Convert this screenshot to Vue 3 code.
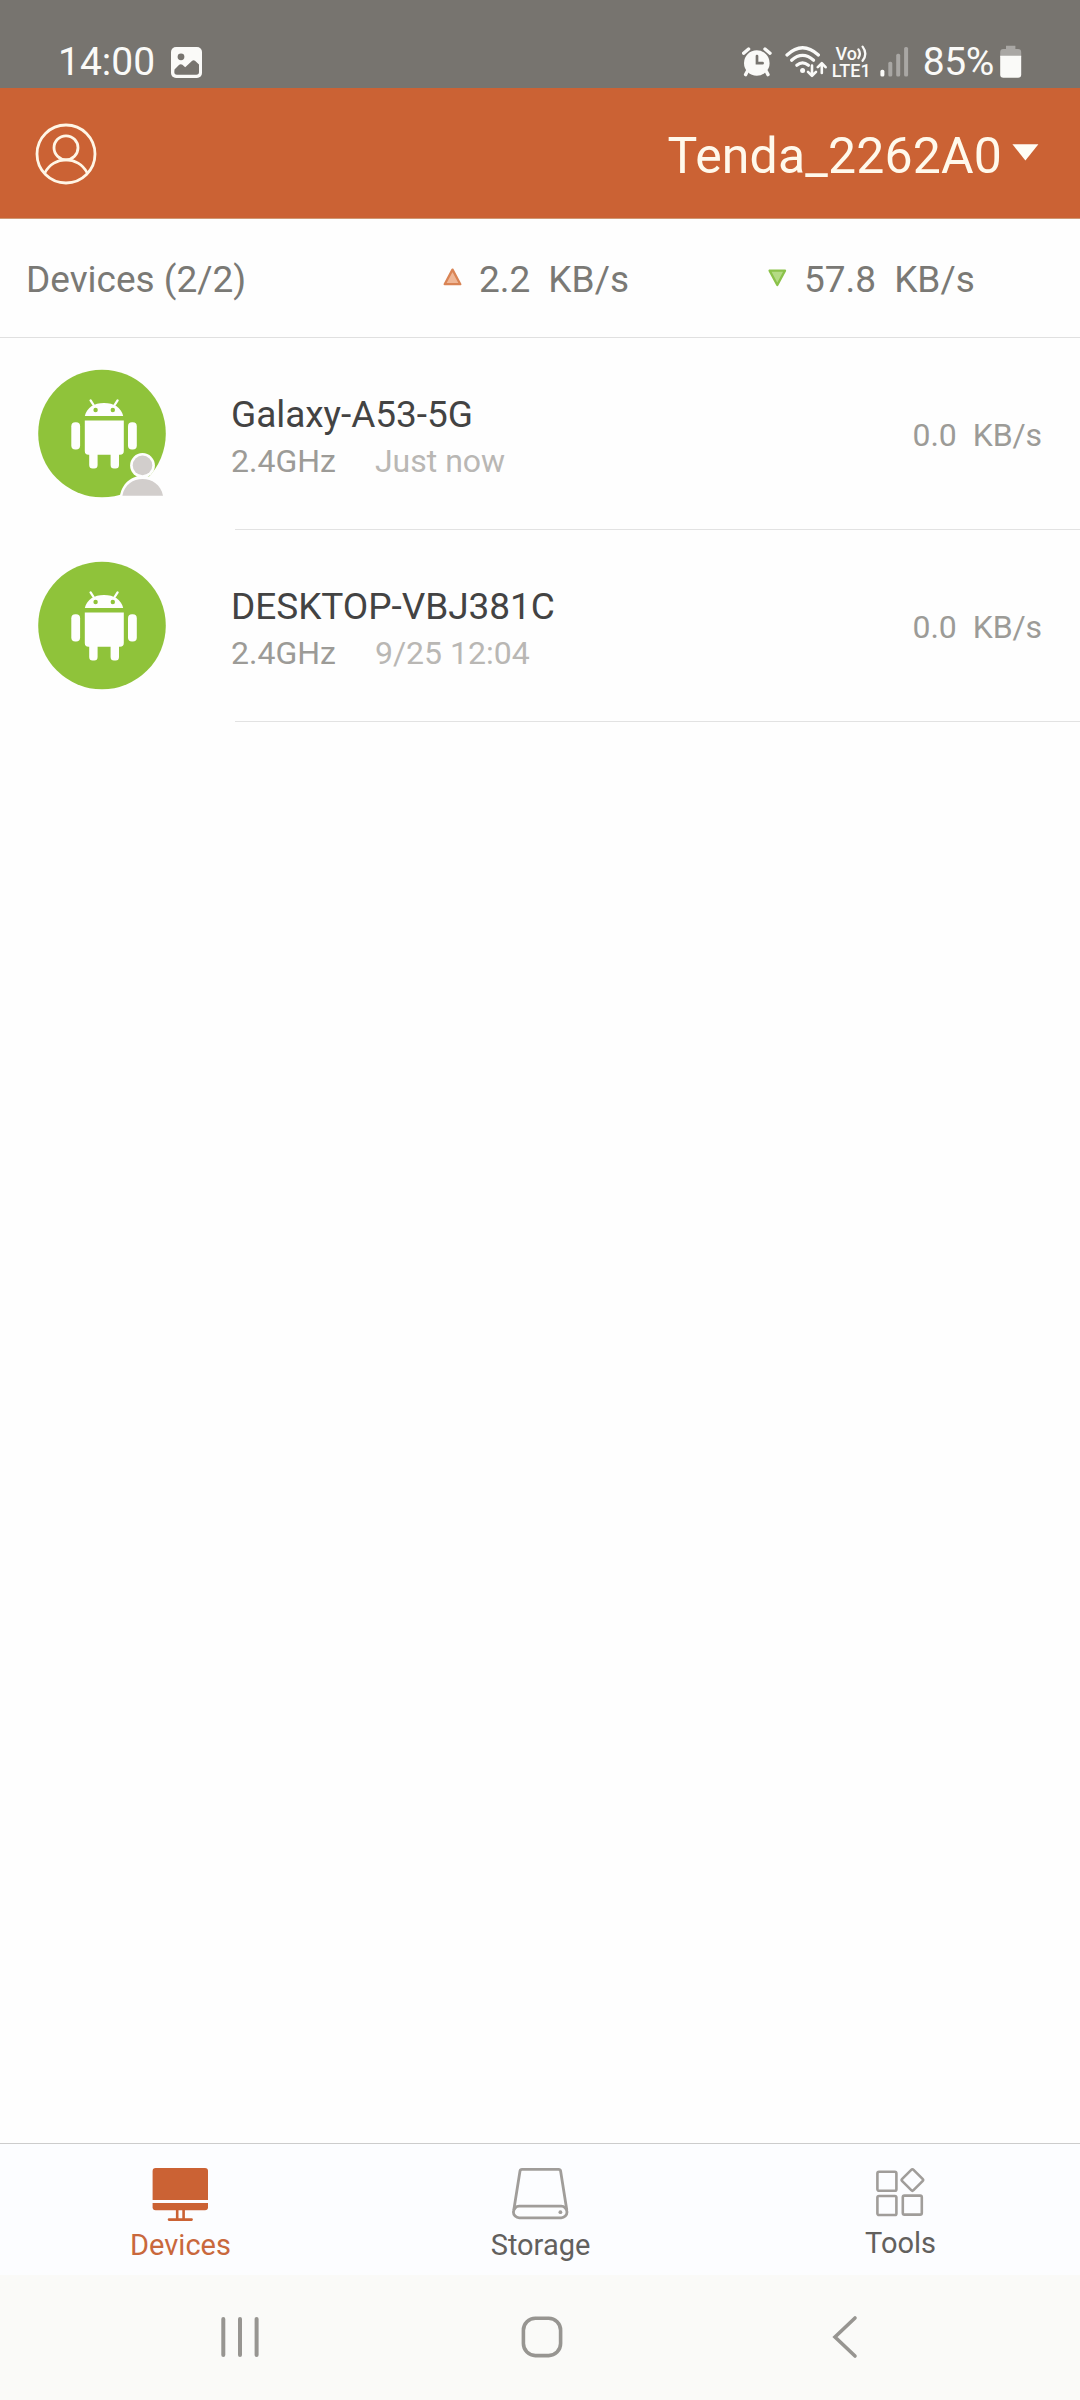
<template>
  <div class="screen">
    <header class="status-bar">
      <span class="clock">14:00</span>
      <svg class="icon-image" width="31" height="31" viewBox="0 0 31 31">
        <rect width="31" height="31" rx="5" fill="#fafaf8" />
        <circle cx="10" cy="9.8" r="3.4" fill="#77746f" />
        <path d="M3.5 22.5 L8.2 17.8 Q9.8 16.6 11.4 17.8 L14.2 20.3 L21.2 13.7 Q22.6 12.6 24 13.7 L28 17.6 V25 Q28 27.7 25.3 27.7 H6 Q3.3 27.7 3.3 25 Z" fill="#77746f" />
      </svg>
      <div class="status-right">
        <svg width="30" height="30" viewBox="0 0 30 30">
          <circle cx="14.8" cy="16" r="12.8" fill="#fafaf8" />
          <path d="M1.6 6.2 L6.6 2 M28 6.2 L23 2" stroke="#fafaf8" stroke-width="3.4" stroke-linecap="round" />
          <path d="M5.2 24.5 L3.6 27.6 M24.4 24.5 L26 27.6" stroke="#fafaf8" stroke-width="3.4" stroke-linecap="round" />
          <path d="M15 9 V16.2 H20.6" fill="none" stroke="#77746f" stroke-width="2.7" stroke-linecap="round" />
        </svg>
        <svg class="icon-wifi" width="42" height="34" viewBox="0 0 42 34">
          <g fill="none" stroke="#fafaf8" stroke-width="3.2" stroke-linecap="round">
            <path d="M2 10 Q17.5 -4.5 33.4 10" />
            <path d="M6.6 15.2 Q17.5 5.5 28.6 15.2" />
            <path d="M11.8 20.3 Q17.5 15.6 23.4 20.3" />
          </g>
          <circle cx="17.6" cy="25.4" r="2.5" fill="#fafaf8" />
          <g fill="none" stroke="#fafaf8" stroke-width="2.6" stroke-linecap="round" stroke-linejoin="round">
            <path d="M27 20.5 V30.5 M23 26.8 L27 30.8 L31 26.8" />
            <path d="M36.8 28 V18.6 M32.8 22.2 L36.8 18.2 L40.6 22.2" />
          </g>
        </svg>
        <div class="volte">
          <div class="volte-top">
            <span>Vo</span>
            <svg width="11" height="17" viewBox="0 0 11 17">
              <path d="M1.4 4.4 Q4.4 8.7 1.4 13 M5.6 1.6 Q11 8.7 5.6 15.8" fill="none" stroke="#fafaf8" stroke-width="2.3" stroke-linecap="round" />
            </svg>
          </div>
          <span class="volte-bottom">LTE1</span>
        </div>
        <svg class="icon-signal" width="29" height="30" viewBox="0 0 29 30">
          <rect x="0.4" y="22.8" width="4" height="6.8" rx="1.6" fill="#fafaf8" />
          <g fill="#a9a7a4">
            <rect x="8.3" y="14.8" width="4" height="14.8" rx="1.6" />
            <rect x="16.2" y="6.8" width="4" height="22.8" rx="1.6" />
            <rect x="24.1" y="0" width="4" height="29.6" rx="1.6" />
          </g>
        </svg>
        <span class="battery-text">85%</span>
        <svg class="icon-battery" width="22" height="33" viewBox="0 0 22 33">
          <path d="M6 0.8 H15.4 V4 H18 Q21.2 4 21.2 7.2 V12 H0.2 V7.2 Q0.2 4 3.4 4 H6 Z" fill="#a9a7a4" />
          <path d="M0.2 10.8 H21.2 V29.6 Q21.2 32.8 18 32.8 H3.4 Q0.2 32.8 0.2 29.6 Z" fill="#fafaf8" />
        </svg>
      </div>
    </header>

    <div class="app-bar">
      <svg class="account" width="62" height="62" viewBox="0 0 62 62">
        <g fill="none" stroke="#fff6e6" stroke-width="2.8">
          <circle cx="31" cy="31" r="29" />
          <circle cx="31" cy="24.8" r="12" />
          <path d="M9.8 50 C18.5 32.5 43.5 32.5 52.2 50" />
        </g>
      </svg>
      <div class="network">
        <span>{{ network }}</span>
        <svg width="27" height="17" viewBox="0 0 27 17">
          <path d="M0.4 0.3 H26.4 L13.4 16.6 Z" fill="#fffdf5" />
        </svg>
      </div>
    </div>

    <div class="summary">
      <span>Devices (2/2)</span>
      <div class="rate">
        <svg width="19" height="18" viewBox="0 0 19 18">
          <path d="M9.5 1.6 L17.3 16.2 H1.7 Z" fill="#efb797" stroke="#d98455" stroke-width="2.3" stroke-linejoin="round" />
        </svg>
        <span class="rate-value">2.2</span>
        <span>KB/s</span>
      </div>
      <div class="rate">
        <svg class="down" width="19" height="18" viewBox="0 0 19 18">
          <path d="M1.6 1.6 H17 L9.3 16 Z" fill="#b4db84" stroke="#8bc24a" stroke-width="2.3" stroke-linejoin="round" />
        </svg>
        <span class="rate-value">57.8</span>
        <span>KB/s</span>
      </div>
    </div>

    <main class="device-list">
      <div v-for="device in devices" :key="device.name" class="device">
        <div class="avatar">
          <svg width="130" height="130" viewBox="0 0 130 130">
            <circle cx="64" cy="64.5" r="63.8" fill="#8fc33a" />
            <g transform="translate(0 1)">
              <g fill="#fefefe">
                <path d="M46.8 46 C48.8 37.6 56 33 66 33 C76 33 83.2 37.6 85.2 46 Z" />
                <path d="M46.8 50.5 H85.8 V81 Q85.8 84.8 82 84.8 H81 V95 Q81 98.5 77.6 98.5 H76 Q72.6 98.5 72.6 95 V84.8 H59.6 V95 Q59.6 98.5 56.2 98.5 H54.6 Q51.2 98.5 51.2 95 V84.8 H50.4 Q46.8 84.8 46.8 81 Z" />
                <rect x="33.3" y="52.2" width="8.8" height="27.2" rx="4" />
                <rect x="90" y="52.2" width="8.8" height="27.2" rx="4" />
              </g>
              <path d="M52.6 30.4 L56.2 36 M79.6 30.4 L76 36" stroke="#fefefe" stroke-width="2.3" stroke-linecap="round" />
              <circle cx="57.6" cy="40" r="2.2" fill="#8fc33a" />
              <circle cx="74.8" cy="40" r="2.2" fill="#8fc33a" />
            </g>
            <g v-if="device.own">
              <path d="M81.5 130 C84 99 125 99 128 130 Z" fill="#fefefe" />
              <circle cx="104.5" cy="96.4" r="12.4" fill="#fefefe" />
              <path d="M84.4 126.8 C88 104.5 121 104.5 125 126.8 Z" fill="#d2cecc" />
              <circle cx="104.5" cy="96.4" r="9.8" fill="#d2cecc" />
            </g>
          </svg>
        </div>
        <div class="device-body">
          <div class="info">
            <div class="name">{{ device.name }}</div>
            <div class="meta">
              <span class="band">{{ device.band }}</span>
              <span class="time">{{ device.time }}</span>
            </div>
          </div>
          <div class="speed">
            <span>0.0</span>
            <span>KB/s</span>
          </div>
        </div>
      </div>
    </main>

    <nav class="tabs">
      <div class="tab active">
        <svg width="58" height="54" viewBox="0 0 58 54">
          <path d="M1.6 32 V3 Q1.6 0 4.6 0 H54 Q57 0 57 3 V32 Z" fill="#cb6234" />
          <path d="M1.6 35 H57 V39.2 Q57 42.2 54 42.2 H4.6 Q1.6 42.2 1.6 39.2 Z" fill="#cb6234" />
          <path d="M26.2 42 V51.4 M32.6 42 V51.4 M18 51.6 H40.6" fill="none" stroke="#cb6234" stroke-width="2.6" stroke-linecap="round" />
        </svg>
        <span>Devices</span>
      </div>
      <div class="tab">
        <svg width="58" height="54" viewBox="0 0 58 54">
          <g fill="none" stroke="#a09d9a" stroke-width="2.8" stroke-linejoin="round">
            <path d="M2.8 42 L9 3 Q9.3 1.4 11 1.4 H47.6 Q49.3 1.4 49.6 3 L55.8 42" />
            <rect x="2.4" y="38.2" width="53.6" height="11.6" rx="5.8" />
          </g>
          <circle cx="49.4" cy="44.2" r="1.9" fill="#a09d9a" />
        </svg>
        <span>Storage</span>
      </div>
      <div class="tab tools">
        <svg width="50" height="50" viewBox="0 0 50 50">
          <g fill="none" stroke="#a09d9a" stroke-width="2.6">
            <rect x="2.4" y="3.8" width="19" height="19" rx="1.6" />
            <rect x="2.4" y="28" width="19" height="19" rx="1.6" />
            <rect x="27.8" y="27.6" width="19" height="19" rx="1.6" />
            <rect x="29.4" y="4" width="16" height="16" rx="1.6" transform="rotate(45 37.4 12)" />
          </g>
        </svg>
        <span>Tools</span>
      </div>
    </nav>

    <footer class="system-nav">
      <svg width="40" height="42" viewBox="0 0 40 42">
        <path d="M3.3 3 V39 M20 3 V39 M36.6 3 V39" stroke="#979591" stroke-width="4" stroke-linecap="round" />
      </svg>
      <svg class="home" width="42" height="42" viewBox="0 0 42 42">
        <rect x="2.4" y="2.2" width="37.2" height="37.4" rx="12" fill="none" stroke="#979591" stroke-width="3.6" />
      </svg>
      <svg width="26" height="44" viewBox="0 0 26 44">
        <path d="M23 3 L3 22 L23 41" fill="none" stroke="#979591" stroke-width="3.6" stroke-linecap="round" />
      </svg>
    </footer>
  </div>
</template>

<script setup>
import { ref } from 'vue'

const network = ref('Tenda_2262A0')

const devices = ref([
  { name: 'Galaxy-A53-5G', band: '2.4GHz', time: 'Just now', own: true },
  { name: 'DESKTOP-VBJ381C', band: '2.4GHz', time: '9/25 12:04', own: false },
])
</script>

<style>
body {
  margin: 0;
  background: #fefefe;
}
</style>

<style scoped>
.screen {
  display: flex;
  flex-direction: column;
  width: 1080px;
  height: 2400px;
  background: #fefefe;
  font-family: Roboto, 'Liberation Sans', sans-serif;
  overflow: hidden;
}

svg {
  display: block;
  flex-shrink: 0;
}

span {
  white-space: nowrap;
}

.status-bar {
  box-sizing: border-box;
  display: flex;
  align-items: center;
  height: 88px;
  padding: 36px 58px 0 58px;
  background: #77746f;
  color: #fafaf8;
  font-size: 39px;
  line-height: 52px;
}

.icon-image {
  margin-left: 16px;
}

.status-right {
  display: flex;
  align-items: center;
  margin-left: auto;
}

.icon-wifi {
  margin-left: 13px;
}

.volte {
  width: 40px;
  margin-left: 5px;
  font-weight: 500;
}

.volte-top {
  display: flex;
  justify-content: center;
  height: 17px;
  font-size: 18px;
  line-height: 17px;
}

.volte-bottom {
  display: block;
  font-size: 18px;
  line-height: 18px;
}

.icon-signal {
  margin-left: 8px;
}

.battery-text {
  margin-left: 14px;
  letter-spacing: -0.4px;
}

.icon-battery {
  margin: 0 0 2px 6px;
}

.app-bar {
  box-sizing: border-box;
  display: flex;
  align-items: center;
  justify-content: space-between;
  height: 131px;
  padding: 0 41px 0 34.5px;
  background: #cb6234;
  border-bottom: 1px solid #cf9873;
}

.account {
  margin-top: 1px;
}

.network {
  display: flex;
  align-items: center;
  gap: 10px;
  padding-top: 5px;
  color: #fff9ec;
  font-size: 50px;
  letter-spacing: 0.15px;
  line-height: 60px;
}

.network svg {
  margin-bottom: 6px;
}

.summary {
  box-sizing: border-box;
  display: grid;
  grid-template-columns: 417px 325px 1fr;
  align-items: center;
  height: 119px;
  padding: 3px 0 0 26px;
  border-bottom: 1px solid #e0e0e0;
  color: #7a7975;
  font-size: 37px;
  line-height: 44px;
}

.rate {
  display: flex;
  align-items: center;
}

.rate svg {
  margin: 0 17px 5px 0;
}

.rate svg.down {
  margin-bottom: 3px;
}

.rate-value {
  margin-right: 18px;
}

.device {
  display: flex;
  height: 192px;
}

.avatar {
  width: 235px;
  box-sizing: border-box;
  padding: 31px 0 0 38px;
}

.device-body {
  box-sizing: border-box;
  display: flex;
  align-items: center;
  justify-content: space-between;
  flex: 1;
  padding: 0 38px 0 0;
  border-bottom: 1px solid #e2e2e2;
}

.info {
  margin: 8px 0 0 -4px;
}

.name {
  color: #434343;
  font-size: 37px;
  letter-spacing: -0.05px;
  line-height: 47px;
}

.meta {
  display: flex;
  gap: 39px;
  color: #9c9b97;
  font-size: 32px;
  line-height: 46px;
}

.time {
  color: #b9b7b4;
}

.speed {
  display: flex;
  gap: 16px;
  padding-top: 3px;
  color: #9c9b97;
  font-size: 32px;
  letter-spacing: -0.1px;
  line-height: 40px;
}

.tabs {
  box-sizing: border-box;
  display: grid;
  grid-template-columns: repeat(3, 1fr);
  height: 132px;
  margin-top: auto;
  padding-top: 24px;
  border-top: 1px solid #cccccc;
  background: #fcfdff;
}

.tab {
  display: flex;
  flex-direction: column;
  align-items: center;
  gap: 6px;
  color: #62605d;
  font-size: 29px;
  line-height: 34px;
}

.tab span {
  padding-left: 1px;
}

.tab.active {
  color: #c9683c;
}

.tab.tools {
  gap: 8px;
}

.system-nav {
  box-sizing: border-box;
  display: flex;
  align-items: center;
  justify-content: space-between;
  height: 125px;
  padding: 0 222px 1px 220px;
  background: #fafaf8;
}

.home {
  margin-right: 8px;
}
</style>
